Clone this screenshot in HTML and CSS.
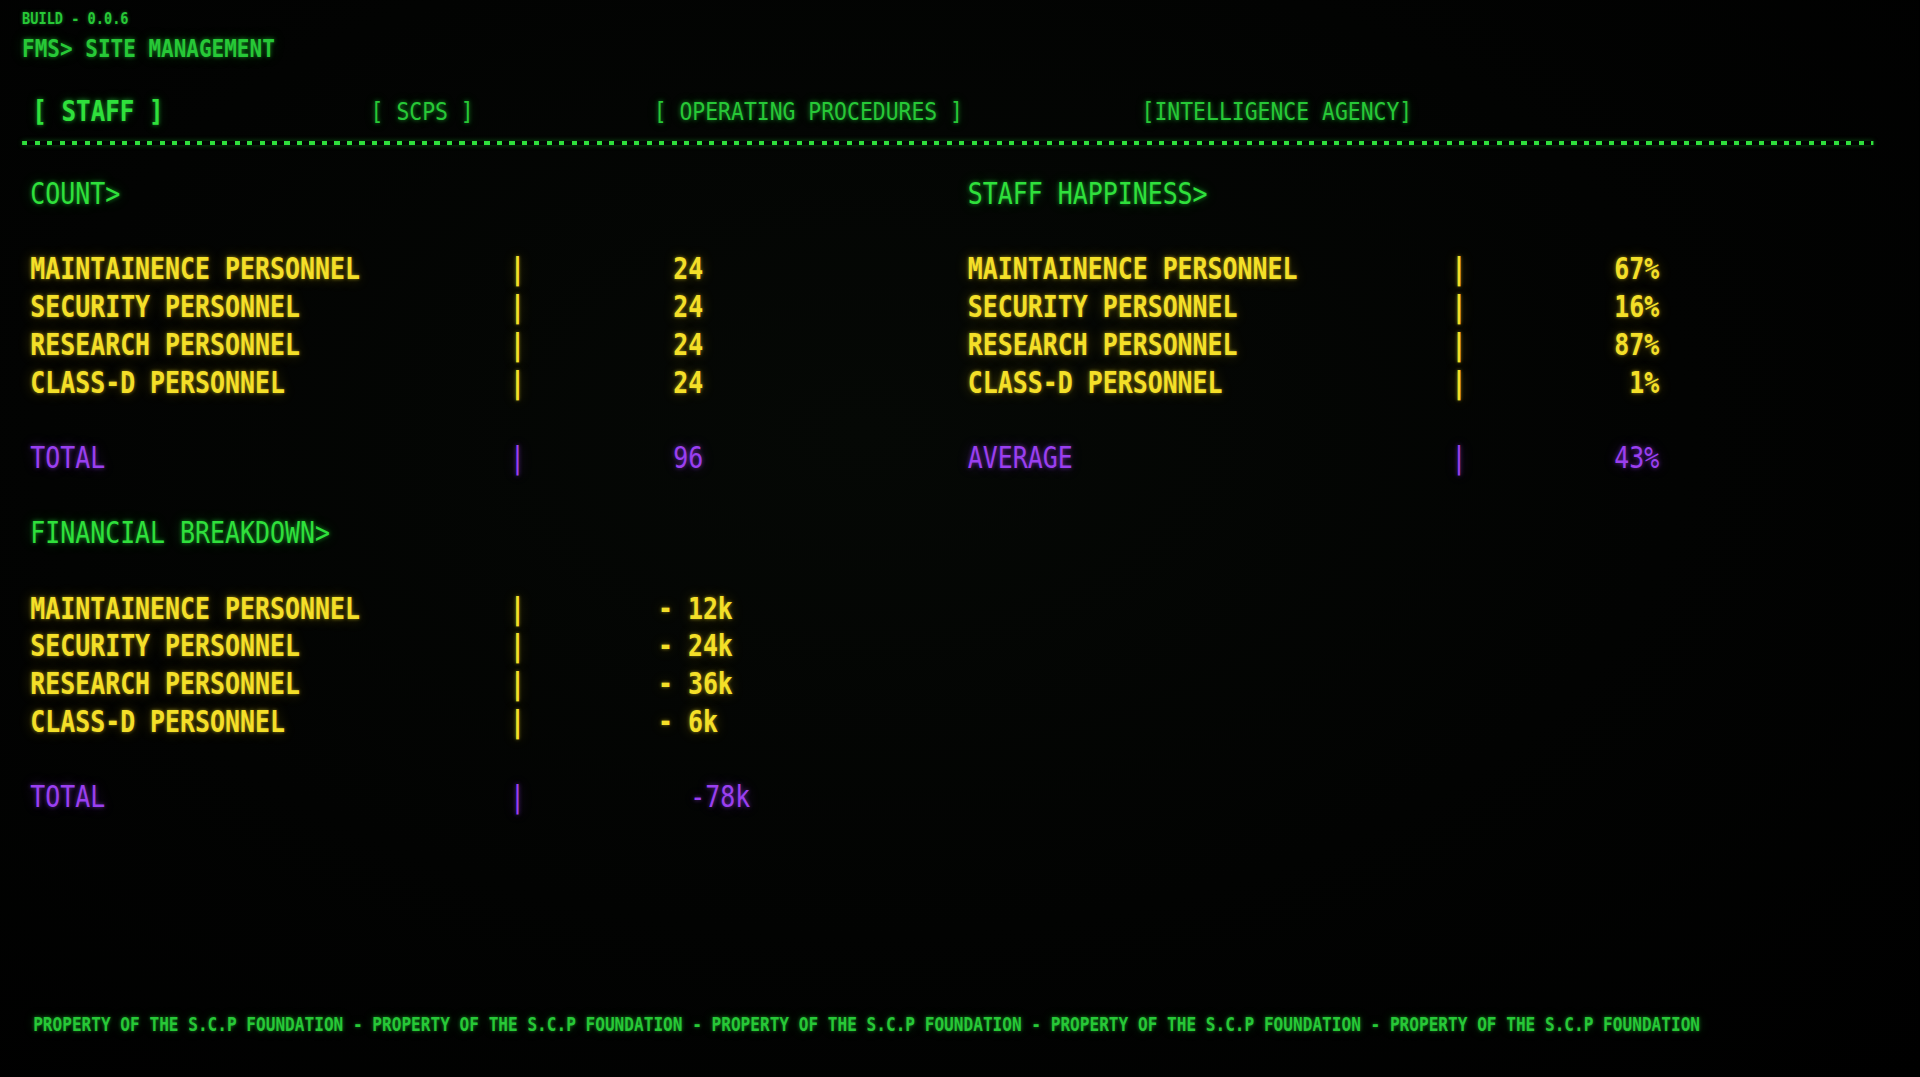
FILE: index.html
```html
<!DOCTYPE html>
<html lang="en">
<head>
<meta charset="utf-8">
<title>FMS - Site Management</title>
<link rel="stylesheet" href="styles.css">
</head>
<body>
<div class="crt">
<div class="screen">
  <header class="top">
    <div class="build">BUILD - 0.0.6</div>
    <h1 class="prompt">FMS&gt; SITE MANAGEMENT</h1>
  </header>

  <nav class="tabs">
    <a class="tab tab--active">[ STAFF ]</a>
    <a class="tab">[ SCPS ]</a>
    <a class="tab">[ OPERATING PROCEDURES ]</a>
    <a class="tab">[INTELLIGENCE AGENCY]</a>
  </nav>
  <div class="rule"></div>

  <main class="panels">
    <section class="panel panel--left">
      <h2 class="heading">COUNT&gt;</h2>
      <div class="blank"></div>
      <div class="row"><span class="label">MAINTAINENCE PERSONNEL</span><span class="sep">|</span><span class="val">24</span></div>
      <div class="row"><span class="label">SECURITY PERSONNEL</span><span class="sep">|</span><span class="val">24</span></div>
      <div class="row"><span class="label">RESEARCH PERSONNEL</span><span class="sep">|</span><span class="val">24</span></div>
      <div class="row"><span class="label">CLASS-D PERSONNEL</span><span class="sep">|</span><span class="val">24</span></div>
      <div class="blank"></div>
      <div class="row row--sum"><span class="label">TOTAL</span><span class="sep">|</span><span class="val">96</span></div>
      <div class="blank"></div>

      <h2 class="heading">FINANCIAL BREAKDOWN&gt;</h2>
      <div class="blank"></div>
      <div class="row row--cost"><span class="label">MAINTAINENCE PERSONNEL</span><span class="sep">|</span><span class="val">- 12k</span></div>
      <div class="row row--cost"><span class="label">SECURITY PERSONNEL</span><span class="sep">|</span><span class="val">- 24k</span></div>
      <div class="row row--cost"><span class="label">RESEARCH PERSONNEL</span><span class="sep">|</span><span class="val">- 36k</span></div>
      <div class="row row--cost"><span class="label">CLASS-D PERSONNEL</span><span class="sep">|</span><span class="val">- 6k</span></div>
      <div class="blank"></div>
      <div class="row row--sum row--costsum"><span class="label">TOTAL</span><span class="sep">|</span><span class="val">-78k</span></div>
    </section>

    <section class="panel panel--right">
      <h2 class="heading">STAFF HAPPINESS&gt;</h2>
      <div class="blank"></div>
      <div class="row"><span class="label">MAINTAINENCE PERSONNEL</span><span class="sep">|</span><span class="val">67%</span></div>
      <div class="row"><span class="label">SECURITY PERSONNEL</span><span class="sep">|</span><span class="val">16%</span></div>
      <div class="row"><span class="label">RESEARCH PERSONNEL</span><span class="sep">|</span><span class="val">87%</span></div>
      <div class="row"><span class="label">CLASS-D PERSONNEL</span><span class="sep">|</span><span class="val">1%</span></div>
      <div class="blank"></div>
      <div class="row row--sum"><span class="label">AVERAGE</span><span class="sep">|</span><span class="val">43%</span></div>
    </section>
  </main>

  <footer class="footer">PROPERTY OF THE S.C.P FOUNDATION - PROPERTY OF THE S.C.P FOUNDATION - PROPERTY OF THE S.C.P FOUNDATION - PROPERTY OF THE S.C.P FOUNDATION - PROPERTY OF THE S.C.P FOUNDATION</footer>
</div>
</div>
</body>
</html>
```

FILE: styles.css
```css
/* Terminal palette */
:root {
  --green: #2fe03c;
  --green-dim: #27c837;
  --yellow: #f4df28;
  --purple: #9a3ff0;
  --line: 37.7px;
}

html, body {
  margin: 0;
  background: #000;
  overflow: hidden;
}

/* Monitor frame: clips the squeezed terminal face */
.crt {
  width: 1920px;
  height: 1077px;
  overflow: hidden;
  background: #000;
}

/* The terminal face is squeezed horizontally to get the tall,
   narrow glyphs of the console font. Layout widths below are
   in the unsqueezed space (screen px / 0.85). */
.screen {
  width: 2258px;
  height: 1077px;
  box-sizing: border-box;
  padding: 9px 0 0 26px;
  display: flex;
  flex-direction: column;
  transform: scaleX(0.85);
  transform-origin: 0 0;
  font-family: "DejaVu Sans Mono", "Liberation Mono", monospace;
  color: var(--green);
  white-space: nowrap;
  overflow: hidden;
  background: radial-gradient(ellipse at 45% 40%, #050805 0%, #020302 55%, #000 100%);
}

/* ---- header ---- */
.build {
  font-size: 16px;
  line-height: 20px;
  font-weight: bold;
  color: var(--green-dim);
  text-shadow: 0 0 4px rgba(40, 210, 60, 0.55);
}

.prompt {
  margin: 5px 0 0;
  font-size: 24.7px;
  line-height: 30px;
  font-weight: bold;
  color: var(--green-dim);
  text-shadow: 0 0 5px rgba(40, 220, 60, 0.55), 0 0 14px rgba(40, 220, 60, 0.25);
}

/* ---- tab strip ---- */
.tabs {
  display: grid;
  grid-template-columns: 398px 333px 574px auto;
  margin-top: 33px;
  padding-left: 12px;
  font-size: 25.2px;
  line-height: 30px;
}

.tab {
  color: var(--green-dim);
  text-shadow: 0 0 5px rgba(40, 220, 60, 0.6), 0 0 12px rgba(40, 220, 60, 0.25);
}

.tab--active {
  font-size: 28.5px;
  font-weight: bold;
  color: var(--green);
}

.rule {
  width: 2178px;
  height: 4px;
  margin-top: 14px;
  flex: none;
  background: repeating-linear-gradient(90deg, var(--green) 0 6px, transparent 6px 14.7px);
  box-shadow: 0 0 6px rgba(40, 220, 60, 0.35);
}

/* ---- data panels ---- */
.panels {
  display: flex;
  margin-top: 31px;
  padding-left: 9.5px;
  font-size: 29.3px;
  line-height: var(--line);
}

.panel--left {
  width: 1103px;
  --c1: 564.5px;
  --c2: 192px;
}

.panel--right {
  --c1: 569px;
}

.heading {
  margin: 0;
  font-size: inherit;
  line-height: inherit;
  font-weight: normal;
  color: var(--green);
  text-shadow: 0 0 5px rgba(40, 225, 60, 0.6), 0 0 14px rgba(40, 225, 60, 0.3);
}

.blank {
  height: var(--line);
}

.row {
  display: grid;
  grid-template-columns: var(--c1) var(--c2) auto;
  font-weight: bold;
  color: var(--yellow);
  text-shadow: 0 0 4px rgba(250, 225, 40, 0.55), 0 0 14px rgba(230, 200, 20, 0.3);
}

.panel--right .row {
  grid-template-columns: var(--c1) 17.6px 227px;
}

.panel--right .val {
  text-align: right;
}

.row--cost .val {
  margin-left: -18px;
}

.row--costsum .val {
  margin-left: 20px;
}

.row--sum {
  font-weight: normal;
  color: var(--purple);
  text-shadow: 0 0 5px rgba(150, 60, 240, 0.6), 0 0 14px rgba(150, 60, 240, 0.3);
}

/* ---- footer marquee ---- */
.footer {
  margin-top: auto;
  padding: 0 0 41px 13px;
  font-size: 18.95px;
  line-height: 24px;
  font-weight: bold;
  color: var(--green-dim);
  text-shadow: 0 0 4px rgba(40, 220, 60, 0.55), 0 0 12px rgba(40, 220, 60, 0.25);
}
```
